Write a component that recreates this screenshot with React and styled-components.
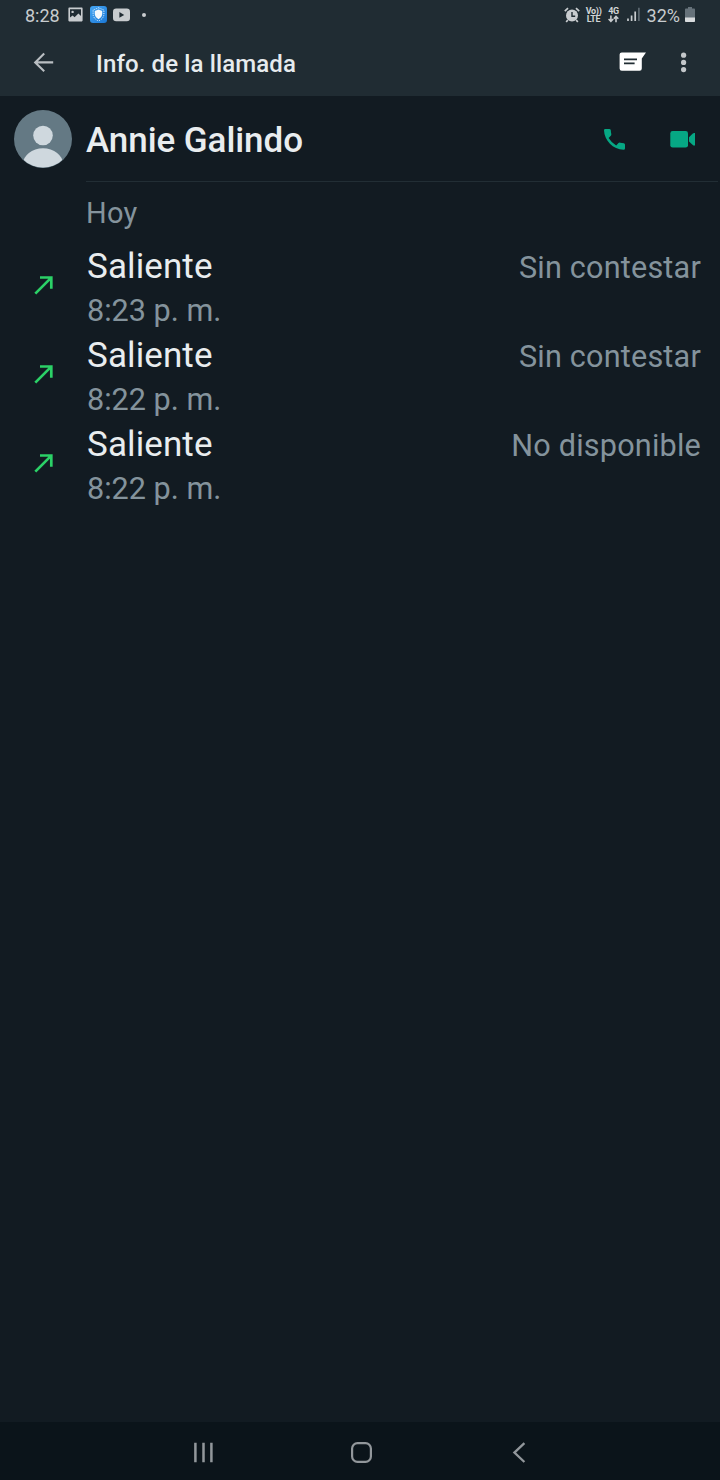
import React from "react";
import styled, { createGlobalStyle } from "styled-components";

const calls = [
  { id: 1, type: "Saliente", time: "8:23 p. m.", status: "Sin contestar" },
  { id: 2, type: "Saliente", time: "8:22 p. m.", status: "Sin contestar" },
  { id: 3, type: "Saliente", time: "8:22 p. m.", status: "No disponible" },
];

const App = () => {
  return (
    <>
      <GlobalStyle />
      <Screen>
        <StatusBar />
        <Toolbar>
          <BackIcon />
          <Title>Info. de la llamada</Title>
          <ToolbarActions>
            <MessageIcon />
            <MoreIcon />
          </ToolbarActions>
        </Toolbar>
        <Contact>
          <Avatar />
          <ContactInfo>
            <Name>Annie Galindo</Name>
            <ContactActions>
              <PhoneIcon />
              <VideoIcon />
            </ContactActions>
          </ContactInfo>
        </Contact>
        <Day>Hoy</Day>
        <CallList>
          {calls.map((call) => (
            <Call key={call.id}>
              <OutgoingIcon />
              <CallText>
                <CallType>{call.type}</CallType>
                <CallTime>{call.time}</CallTime>
              </CallText>
              <CallStatus>{call.status}</CallStatus>
            </Call>
          ))}
        </CallList>
        <NavBar />
      </Screen>
    </>
  );
};

const StatusBar = () => (
  <Status>
    <StatusGroup $gap="6px">
      <StatusText $width="37px">8:28</StatusText>
      <svg width="16" height="16" viewBox="0 0 16 16">
        <path
          fillRule="evenodd"
          fill="#c8cccf"
          d="M1.2 .6H13.8Q14.6 .6 14.6 1.4V13.6Q14.6 14.4 13.8 14.4H1.2Q.4 14.4 .4 13.6V1.4Q.4 .6 1.2 .6ZM2 2.2V10.6L4.6 8.4L6.6 10.2L10.4 6.4L13 9V2.2Z"
        />
        <circle cx="4.6" cy="4.9" r="1.2" fill="#c8cccf" />
      </svg>
      <svg width="17" height="17" viewBox="0 0 17 17">
        <defs>
          <linearGradient id="shieldBg" x1="0" y1="0" x2="1" y2="1">
            <stop offset="0" stopColor="#45a6f3" />
            <stop offset="1" stopColor="#1b78d6" />
          </linearGradient>
        </defs>
        <rect width="17" height="17" rx="3" fill="url(#shieldBg)" />
        <path
          d="M8.5 1.8L13.9 4V8.2Q13.7 12.6 8.5 15Q3.3 12.6 3.1 8.2V4Z"
          fill="none"
          stroke="#e6f4ff"
          strokeWidth="1"
          strokeDasharray="1.1 1.1"
        />
        <path
          d="M8.5 3.4L12.2 4.9V8Q12 11.2 8.5 13.2Q5 11.2 4.8 8V4.9Z"
          fill="#f3f8fc"
        />
      </svg>
      <svg width="17" height="14" viewBox="0 0 17 14">
        <rect x="0" y=".6" width="17" height="12.6" rx="3.2" fill="#c8cccf" />
        <path d="M6.4 4.1V9.7L11.2 6.9Z" fill="#202c33" />
      </svg>
      <Dot />
    </StatusGroup>
    <StatusGroup $gap="7px">
      <svg width="16" height="16" viewBox="0 0 16 16">
        <circle cx="8" cy="8.6" r="6" fill="#c8cccf" />
        <path
          d="M.8 4.2L4 1.2M15.2 4.2L12 1.2M3.8 13L2.2 15M12.2 13L13.8 15"
          stroke="#c8cccf"
          strokeWidth="1.7"
          fill="none"
        />
        <path d="M8 5V9.2H11.2" stroke="#202c33" strokeWidth="1.4" fill="none" />
      </svg>
      <Network $width="14px">
        <Tiny>Vo))</Tiny>
        <Tiny>LTE</Tiny>
      </Network>
      <Network $width="12px">
        <Tiny>4G</Tiny>
        <svg width="11" height="8" viewBox="0 0 11 8">
          <path
            d="M2.9 .6V6M.6 4L2.9 6.4L5.2 4M8 7.2V1.8M5.8 3.8L8 1.5L10.3 3.8"
            stroke="#c8cccf"
            strokeWidth="1.6"
            fill="none"
          />
        </svg>
      </Network>
      <svg width="13" height="15" viewBox="0 0 13 15">
        <path d="M1 11.4V14M4.6 8.6V14M8.2 4.4V14" stroke="#c8cccf" strokeWidth="1.7" />
        <path d="M11.9 .8V14" stroke="#66727a" strokeWidth="1.5" />
      </svg>
      <StatusText>32%</StatusText>
      <Battery width="10" height="15" viewBox="0 0 10 15">
        <path d="M3 0H7V1.6H9.2Q10 1.6 10 2.4V11H0V2.4Q0 1.6 .8 1.6H3Z" fill="#66727a" />
        <path d="M0 10.6H10V14.2Q10 15 9.2 15H.8Q0 15 0 14.2Z" fill="#d8dbdd" />
      </Battery>
    </StatusGroup>
  </Status>
);

const BackIcon = () => (
  <svg width="22" height="22" viewBox="0 0 22 22">
    <path
      d="M20.2 10.4H2.4M11.2 1.6L2.2 10.4L11.2 19.2"
      stroke="#b9bec2"
      strokeWidth="2.1"
      fill="none"
    />
  </svg>
);

const MessageIcon = () => (
  <svg width="28" height="22" viewBox="0 0 28 22">
    <path
      d="M2.8 .4H27L22.8 6.4V16.6Q22.8 18.8 20.6 18.8H2.8Q.6 18.8 .6 16.6V2.6Q.6 .4 2.8 .4Z"
      fill="#fff"
    />
    <path d="M5 7.3H18M5 11.3H15.6" stroke="#202c33" strokeWidth="1.8" />
  </svg>
);

const MoreIcon = () => (
  <svg width="6" height="22" viewBox="0 0 6 22">
    <circle cx="2.6" cy="3.2" r="2.6" fill="#c3c7ca" />
    <circle cx="2.6" cy="10.4" r="2.6" fill="#c3c7ca" />
    <circle cx="2.6" cy="17.6" r="2.6" fill="#c3c7ca" />
  </svg>
);

const Avatar = () => (
  <svg width="58" height="58" viewBox="0 0 58 58">
    <defs>
      <clipPath id="avatarClip">
        <circle cx="29" cy="29" r="28.5" />
      </clipPath>
    </defs>
    <circle cx="29" cy="29" r="29" fill="#647984" />
    <circle cx="29" cy="25.5" r="9.8" fill="#cfd8de" />
    <ellipse
      cx="29"
      cy="54"
      rx="20"
      ry="15.7"
      fill="#cfd8de"
      clipPath="url(#avatarClip)"
    />
  </svg>
);

const PhoneIcon = () => (
  <svg width="24" height="24" viewBox="0 0 24 24">
    <path
      d="M2.3 1.9H6.2Q7.6 1.9 7.8 3.2Q7.9 5.3 8.3 7Q8.5 8 7.8 8.8L5.6 11Q8.5 15.8 13.2 18.4L15.5 16.1Q16.2 15.4 17.2 15.7Q19 16 20.8 16.2Q22 16.4 22 17.8V21.4Q22 22.8 20.6 22.8C10 22.5 1.3 13.5 1 3.3Q1 1.9 2.3 1.9Z"
      fill="#06a884"
    />
  </svg>
);

const VideoIcon = () => (
  <svg width="26" height="18" viewBox="0 0 26 18">
    <rect x=".3" y="1" width="17.7" height="16.6" rx="2.4" fill="#06a884" />
    <path
      d="M19 7.2L22.8 3.5Q23.4 3 24.2 3H25V15.6H24.2Q23.4 15.6 22.8 15.1L19 11.4Z"
      fill="#06a884"
    />
  </svg>
);

const OutgoingIcon = () => (
  <svg width="20" height="20" viewBox="0 0 20 20">
    <path
      d="M1.3 18.6L17 2.9M6 2.5H17.3V13.8"
      stroke="#2bd167"
      strokeWidth="2.7"
      fill="none"
    />
  </svg>
);

const NavBar = () => (
  <Nav>
    <svg width="22" height="22" viewBox="0 0 22 22">
      <path
        d="M2.4 .7V20.3M10.5 .7V20.3M18.4 .7V20.3"
        stroke="#92979b"
        strokeWidth="2.5"
      />
    </svg>
    <svg width="22" height="22" viewBox="0 0 22 22">
      <rect
        x="1.1"
        y="1.1"
        width="18.8"
        height="18.8"
        rx="5.4"
        fill="none"
        stroke="#92979b"
        strokeWidth="2.2"
      />
    </svg>
    <svg width="22" height="22" viewBox="0 0 22 22">
      <path
        d="M15.4 1.2L5.4 10.6L15.4 20"
        fill="none"
        stroke="#92979b"
        strokeWidth="2.3"
      />
    </svg>
  </Nav>
);

const GlobalStyle = createGlobalStyle`
  * {
    box-sizing: border-box;
  }
  body {
    margin: 0;
    background: #121b22;
    font-family: Roboto, "Liberation Sans", sans-serif;
  }
  svg {
    display: block;
    flex-shrink: 0;
  }
`;

const Screen = styled.div`
  display: flex;
  flex-direction: column;
  width: 720px;
  height: 1480px;
  background: #121b22;
  overflow: hidden;
`;

const Status = styled.div`
  display: flex;
  justify-content: space-between;
  height: 30px;
  padding: 0 25px 0 25px;
  background: #202c33;
`;

const StatusGroup = styled.div`
  display: flex;
  align-items: center;
  gap: ${(props) => props.$gap};
  height: 29px;
`;

const StatusText = styled.span`
  width: ${(props) => props.$width || "auto"};
  padding-top: 3px;
  color: #c8cccf;
  font-size: 18px;
  line-height: 28px;
`;

const Dot = styled.span`
  width: 4px;
  height: 4px;
  margin-left: 6px;
  border-radius: 50%;
  background: #c8cccf;
`;

const Network = styled.div`
  display: flex;
  flex-direction: column;
  align-items: center;
  width: ${(props) => props.$width};
  height: 16px;
`;

const Tiny = styled.span`
  color: #d0d4d6;
  font-size: 9px;
  font-weight: 700;
  line-height: 8px;
  letter-spacing: -0.3px;
`;

const Battery = styled.svg`
  margin-left: -2px;
`;

const Toolbar = styled.header`
  display: flex;
  align-items: center;
  height: 66px;
  padding: 0 33px 0 33px;
  background: #202c33;
`;

const Title = styled.h1`
  margin: 0 0 0 41px;
  padding-top: 2px;
  color: #e6ebee;
  font-size: 24px;
  font-weight: 500;
  line-height: 64px;
  letter-spacing: 0.12px;
`;

const ToolbarActions = styled.div`
  display: flex;
  align-items: center;
  gap: 34px;
  margin-left: auto;
`;

const Contact = styled.section`
  display: flex;
  height: 86px;
  padding: 14px 2px 0 14px;
`;

const ContactInfo = styled.div`
  display: flex;
  flex: 1;
  align-items: center;
  justify-content: space-between;
  margin: -14px 0 0 14px;
  padding-right: 22px;
  border-bottom: 1px solid #222e35;
`;

const Name = styled.h2`
  margin: 0;
  padding-top: 4px;
  color: #e9edef;
  font-size: 35px;
  font-weight: 500;
  line-height: 80px;
  letter-spacing: -0.07px;
`;

const ContactActions = styled.div`
  display: flex;
  align-items: center;
  gap: 43px;
`;

const Day = styled.h3`
  margin: 0;
  padding-left: 86px;
  color: #84939c;
  font-size: 29px;
  font-weight: 400;
  line-height: 62px;
  letter-spacing: 0.3px;
`;

const CallList = styled.div`
  flex: 1;
`;

const Call = styled.div`
  display: flex;
  height: 89px;
  padding: 0 19px 0 34px;

  svg {
    margin-top: 31px;
  }
`;

const CallText = styled.div`
  margin-left: 33px;
`;

const CallType = styled.div`
  padding-top: 1px;
  color: #e9edef;
  font-size: 35px;
  line-height: 44px;
  letter-spacing: 0.1px;
`;

const CallTime = styled.div`
  color: #84939c;
  font-size: 30.6px;
  line-height: 43px;
`;

const CallStatus = styled.div`
  margin-left: auto;
  padding-top: 1px;
  color: #84939c;
  font-size: 30.6px;
  line-height: 46px;
  letter-spacing: 0.2px;
`;

const Nav = styled.nav`
  display: grid;
  grid-template-columns: repeat(3, 158px);
  place-items: center;
  height: 58px;
  padding: 3px 0 0 125px;
  background: #0b141a;
`;

export default App;
